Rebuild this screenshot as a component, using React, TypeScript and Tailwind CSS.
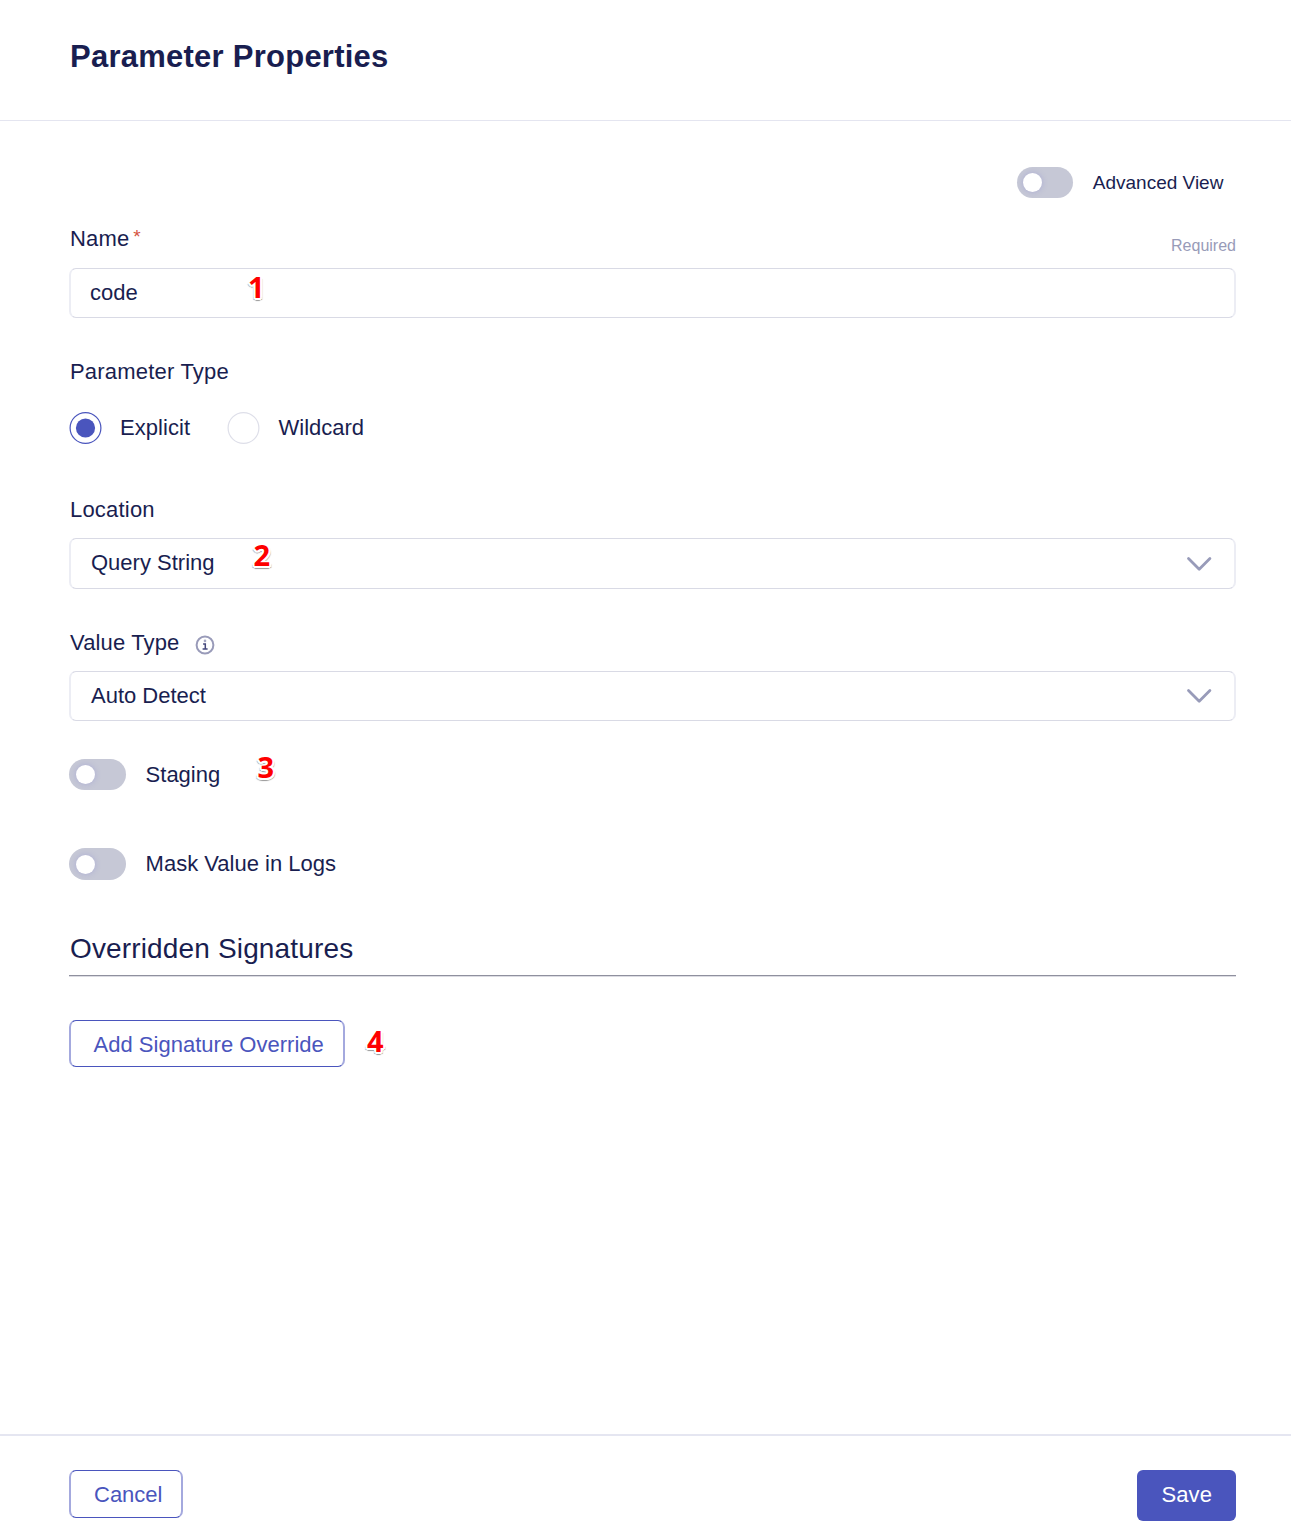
import type { ReactNode } from 'react';

function Toggle({ className, label, children }: { className: string; label: string; children?: ReactNode }) {
  return (
    <div className="flex items-center">
      <button type="button" role="switch" aria-checked={false} aria-label={label} className={`flex shrink-0 items-center rounded-full bg-[#c6c8d6] ${className}`}>
        <span className="size-[19px] rounded-full bg-white shadow-[0_0_5px_1px_rgba(130,130,210,0.28)]" />
      </button>
      {children}
    </div>
  );
}

function Radio({ checked = false }: { checked?: boolean }) {
  return (
    <svg viewBox="0 0 33 32" className="h-8 w-[33px] shrink-0">
      <circle cx="16.5" cy="16" r="15.4" fill="white" stroke={checked ? '#4a55bd' : '#dedfe9'} strokeWidth="1.2" />
      {checked && <circle cx="16.5" cy="16" r="9.6" fill="#4a55bd" />}
    </svg>
  );
}

function Chevron() {
  return (
    <svg viewBox="0 0 26 16" className="h-4 w-[26px]" fill="none" stroke="#989bb9" strokeWidth="2.8" strokeLinecap="round" strokeLinejoin="round">
      <path d="M2.5 2.6 13.2 13.2 23.9 2.6" />
    </svg>
  );
}

function InfoIcon() {
  return (
    <svg viewBox="0 0 20 20" className="size-5" fill="none">
      <circle cx="10" cy="10" r="8.4" stroke="#999bb9" strokeWidth="2" />
      <circle cx="10" cy="5.9" r="1.3" fill="#a5a7c2" />
      <path d="M8.1 8.9h2.2v5M7.6 14h5" stroke="#44487c" strokeWidth="1.5" />
    </svg>
  );
}

function Marker({ className, children }: { className: string; children: ReactNode }) {
  return (
    <span
      className={`absolute font-['Open_Sans','Noto_Sans',sans-serif] text-[29px] leading-8 font-bold tracking-normal text-[#fe0000] [text-shadow:-2px_-1px_0_#fff,2px_-1px_0_#fff,-2px_1px_0_#fff,2px_1px_0_#fff,0_2px_0_#fff,-1px_2px_0_#fff,1px_2px_0_#fff,0_3px_1px_#999,-2px_2px_1px_#999,2px_2px_1px_#999] ${className}`}
    >
      {children}
    </span>
  );
}

const field = 'relative flex justify-between rounded-[7px] border-x-2 border-y border-x-[#ecedf4] border-y-[#d9dae5] bg-white';
const outline = 'rounded-[7px] border-x-2 border-y border-x-[#a4a9de] border-y-[#4a55bd] text-[#4a55bd]';

export default function App() {
  return (
    <div className="flex h-[1536px] w-[1291px] flex-col bg-white font-['Liberation_Sans',Arial,sans-serif] text-[22px] leading-8 text-[#191e50]">
      <header className="h-[121px] shrink-0 border-b border-[#e4e5f0] pt-[37px] pl-[70px]">
        <h1 className="text-[31px] leading-10 font-bold tracking-[0.25px]">Parameter Properties</h1>
      </header>

      <main className="flex grow flex-col pt-[46px] pr-[55px] pl-[69px]">
        <div className="flex justify-end pr-[12.6px]">
          <Toggle className="h-[31px] w-14 pl-1.5" label="Advanced View">
            <span className="ml-[19.5px] text-[19px] leading-[31px]">Advanced View</span>
          </Toggle>
        </div>

        <div className="mt-[25px] flex h-[45px] justify-between pl-px">
          <label className="tracking-[0.15px]">
            Name<span className="relative -top-[3px] ml-[4px] text-[19px] text-[#d4533f]">*</span>
          </label>
          <span className="pt-[7px] text-base leading-8 text-[#989bb8]">Required</span>
        </div>
        <div className={`${field} h-[50px] pt-2 pl-[19px]`}>
          <span>code</span>
          <Marker className="top-[2px] left-[177px]">1</Marker>
        </div>

        <div className="mt-[38px] pl-px tracking-[0.2px]">Parameter Type</div>
        <div className="mt-6 flex">
          <Radio checked />
          <span className="ml-[18px] w-[107px] tracking-[0.05px]">Explicit</span>
          <Radio />
          <span className="ml-[18.5px]">Wildcard</span>
        </div>

        <div className="mt-[50px] h-11 pl-px tracking-[0.2px]">Location</div>
        <div className={`${field} h-[51px] pt-2 pr-[22px] pl-[20px]`}>
          <span>Query String</span>
          <span className="pt-[9px]"><Chevron /></span>
          <Marker className="top-0 left-[182.5px]">2</Marker>
        </div>

        <div className="mt-[38px] flex h-11 pl-px">
          <span className="w-[109px] tracking-[0.14px] whitespace-nowrap">Value Type</span>
          <span className="ml-[16px] pt-[8px]"><InfoIcon /></span>
        </div>
        <div className={`${field} h-[50px] pt-2 pr-[22px] pl-[20px]`}>
          <span>Auto Detect</span>
          <span className="pt-[8px]"><Chevron /></span>
        </div>

        <div className="relative mt-[38px] flex">
          <Toggle className="h-[31px] w-[57px] pl-[7px]" label="Staging">
            <span className="ml-[19.6px] h-[31px] leading-[31px]">Staging</span>
          </Toggle>
          <Marker className="-top-[8px] left-[188.5px]">3</Marker>
        </div>
        <div className="mt-[58px] flex">
          <Toggle className="h-8 w-[57px] pl-[7px]" label="Mask Value in Logs">
            <span className="ml-[19.6px] h-8 leading-[31px]">Mask Value in Logs</span>
          </Toggle>
        </div>

        <div className="mt-[53px] h-[43px] border-b border-[#8f909e] pl-px shadow-[0_1px_0_#dcdce3]">
          <h2 className="text-[28px] leading-8 tracking-[0.15px]">Overridden Signatures</h2>
        </div>

        <div className="relative mt-[44px] flex">
          <button type="button" className={`${outline} h-[47px] w-[276px] pt-[2px] pl-[22.5px] text-left tracking-[0.02px]`}>Add Signature Override</button>
          <Marker className="top-[5px] left-[298px]">4</Marker>
        </div>
      </main>

      <footer className="flex h-[102px] shrink-0 items-start justify-between border-t-2 border-[#e5e6f1] pt-[34px] pr-[55px] pl-[69px]">
        <button type="button" className={`${outline} h-12 w-[114px] pt-[2px] pl-[23px] text-left`}>Cancel</button>
        <button type="button" className="h-[51px] w-[99px] rounded-[6px] bg-[#4a55bd] pb-px pl-[24.5px] text-left tracking-[0.1px] text-white">Save</button>
      </footer>
    </div>
  );
}
